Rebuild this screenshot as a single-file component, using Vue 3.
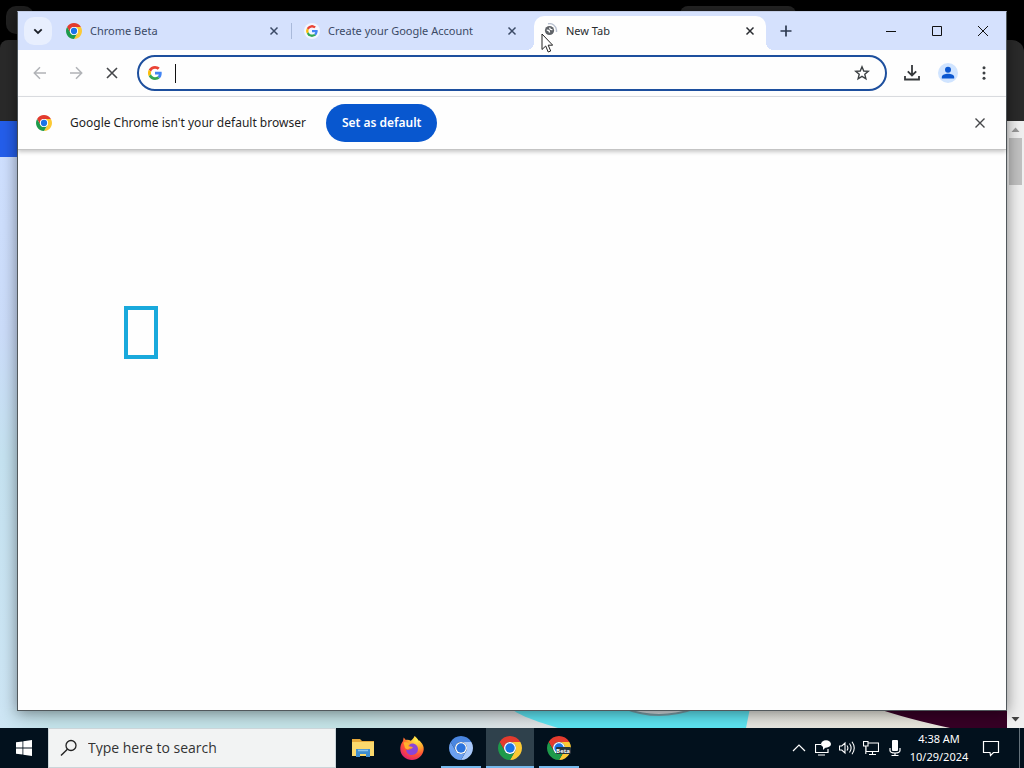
<script setup>
import { ref } from 'vue'

const address = ref('')
const query = ref('')
const tabs = [
  { title: 'Chrome Beta', icon: 'chrome', active: false },
  { title: 'Create your Google Account', icon: 'google', active: false },
  { title: 'New Tab', icon: 'loading', active: true },
]
const apps = [
  { name: 'File Explorer', icon: 'folder', state: '' },
  { name: 'Firefox', icon: 'firefox', state: '' },
  { name: 'Chromium', icon: 'chromium', state: 'open' },
  { name: 'Google Chrome', icon: 'chrome', state: 'open current' },
  { name: 'Chrome Beta', icon: 'beta', state: 'open' },
]
</script>

<template>
  <svg class="symbols" aria-hidden="true">
    <defs>
      <symbol id="i-chrome" viewBox="0 0 24 24">
        <path fill="#e33b2e" d="M1.61 6A12 12 0 0 1 22.39 6H12A6 6 0 0 0 6.8 15Z" />
        <path fill="#fcc934" transform="rotate(120 12 12)" d="M1.61 6A12 12 0 0 1 22.39 6H12A6 6 0 0 0 6.8 15Z" />
        <path fill="#1e9a4b" transform="rotate(240 12 12)" d="M1.61 6A12 12 0 0 1 22.39 6H12A6 6 0 0 0 6.8 15Z" />
        <circle cx="12" cy="12" r="6" fill="#fff" />
        <circle cx="12" cy="12" r="4.7" fill="#1a73e8" />
      </symbol>
      <symbol id="i-chromium" viewBox="0 0 24 24">
        <path fill="#4a86e0" d="M1.61 6A12 12 0 0 1 22.39 6H12A6 6 0 0 0 6.8 15Z" />
        <path fill="#a9c9fb" transform="rotate(120 12 12)" d="M1.61 6A12 12 0 0 1 22.39 6H12A6 6 0 0 0 6.8 15Z" />
        <path fill="#6ba0f0" transform="rotate(240 12 12)" d="M1.61 6A12 12 0 0 1 22.39 6H12A6 6 0 0 0 6.8 15Z" />
        <circle cx="12" cy="12" r="6" fill="#fff" />
        <circle cx="12" cy="12" r="4.7" fill="#2b74de" />
      </symbol>
      <symbol id="i-beta" viewBox="0 0 24 24">
        <use href="#i-chrome" width="24" height="24" />
        <rect x="9" y="11" width="15" height="7" rx="1" fill="#25343d" />
        <text x="16" y="16.8" text-anchor="middle" class="beta-text">Beta</text>
      </symbol>
      <symbol id="i-google" viewBox="0 0 48 48">
        <path fill="#ea4335" d="M24 9.5c3.54 0 6.71 1.22 9.21 3.6l6.85-6.85C35.9 2.38 30.47 0 24 0 14.62 0 6.51 5.38 2.56 13.22l7.98 6.19C12.43 13.72 17.74 9.5 24 9.5z" />
        <path fill="#4285f4" d="M46.98 24.55c0-1.57-.15-3.09-.38-4.55H24v9.02h12.94c-.58 2.96-2.26 5.48-4.78 7.18l7.73 6c4.51-4.18 7.09-10.36 7.09-17.65z" />
        <path fill="#fbbc05" d="M10.53 28.59A14.5 14.5 0 0 1 9.77 24c0-1.6.27-3.14.76-4.59l-7.98-6.19A23.9 23.9 0 0 0 0 24c0 3.88.92 7.54 2.56 10.78l7.97-6.19z" />
        <path fill="#34a853" d="M24 48c6.48 0 11.93-2.13 15.89-5.81l-7.73-6c-2.15 1.45-4.92 2.3-8.16 2.3-6.26 0-11.57-4.22-13.47-9.91l-7.98 6.19C6.51 42.62 14.62 48 24 48z" />
      </symbol>
      <symbol id="i-loading" viewBox="0 0 16 16">
        <path d="M6 .8a7 7 0 0 1 8.500 6.200v2" fill="none" stroke="#b9c1d0" stroke-width="1.4" />
        <circle cx="7.5" cy="7.5" r="4.6" fill="#5f6368" />
        <path d="M4.800 7.200c1.800-.2 2.700.5 2.700 2.300M7.800 4.600c-.2 1.600.8 2.200 2.600 2" fill="none" stroke="#fff" stroke-width="1.400" />
      </symbol>
      <symbol id="i-folder" viewBox="0 0 24 24">
        <path d="M1 3h8l2 2h12v15H1z" fill="#e6a93a" />
        <path d="M1 6h22v14H1z" fill="#fbd96d" />
        <path d="M5 13h14v8h-4v-3H9v3H5z" fill="#3f8ed0" />
        <path d="M7 14.500h10" stroke="#8cc5ee" stroke-width="1.500" />
      </symbol>
      <radialGradient id="fox" cx="70%" cy="15%" r="90%">
        <stop offset="0" stop-color="#fff04e" /><stop offset=".4" stop-color="#ffa52c" />
        <stop offset=".7" stop-color="#ff5136" /><stop offset="1" stop-color="#e1236f" />
      </radialGradient>
      <symbol id="i-firefox" viewBox="0 0 24 24">
        <path fill="url(#fox)" d="M14.500 0c2 1.200 3.200 3 4 4.500 1-.1 1.700.5 2.200 1.600C23 8.500 24 11 23.700 13.700 23 19.500 18 24 12 24S.6 19.500.3 13.500C.1 10.500 1 7.500 3 5l.6-3.500C4.500 2.200 5.200 3 5.800 4c1.800-.4 3.500 0 5 .8 1-.6 2.800-2.500 3.700-4.800z" />
        <path fill="#8b45d8" d="M12 7.500c3.800 0 6 2.500 6 5.600 0 3.500-2.600 5.900-6 5.900-3.600 0-6-2.600-5.800-5.600 1 .7 2.300.7 3.400.1 1.200-.7 2.200-.9 3-1.500.5-.9-.4-1.200-1.500-1.300-1 0-1.700-.3-2.100-.8.3-1.200 1.400-2.300 3-2.400z" />
        <path fill="#ffb12e" d="M3.500 6.500C6 5.700 8 6.300 9.500 8c-1 .5-1.500 1.200-1.500 2 .5.700 1.500.8 3 .9-.6 1-1.600 1.200-2.600 2.100-1.400.7-2.900-.2-3.500-1.500z" />
      </symbol>
    </defs>
  </svg>

  <div class="desktop">
    <div class="backdrop">
      <div class="back-tabs"><span class="back-pill"></span><span class="back-tab"></span></div>
      <div class="back-toolbar"></div>
      <div class="back-page">
        <div class="wallpaper">
          <div class="blue-band"></div>
          <svg class="shapes" viewBox="0 0 1007 20" preserveAspectRatio="none" aria-hidden="true">
            <path d="M510 0C518 6 528 11 558 20H746L750 0z" fill="#5ce2ef" />
            <path d="M624 0Q658 14 696 0z" fill="#d6dde2" stroke="#789ca5" stroke-width="2" />
            <path d="M876 0Q904 10 950 20H1007V0z" fill="#360025" />
          </svg>
        </div>
        <div class="scrollbar">
          <svg viewBox="0 0 17 17"><path d="M4.500 11 8.500 6.500 12.500 11z" fill="#999" /></svg>
          <span class="thumb"></span>
          <svg class="down" viewBox="0 0 17 17"><path d="M4.500 6 8.500 10.500 12.500 6z" fill="#444" /></svg>
        </div>
      </div>
    </div>

    <main class="window">
      <header class="strip">
        <button class="tab-search" aria-label="Search tabs">
          <svg viewBox="0 0 16 16"><path d="m4.300 6.300 3.700 3.700 3.700-3.700" fill="none" stroke="#1b1f27" stroke-width="1.800" /></svg>
        </button>
        <nav class="tabs">
          <div v-for="t in tabs" :key="t.title" class="tab" :class="{ active: t.active }">
            <svg class="favicon" :class="t.icon"><use :href="'#i-' + t.icon" /></svg>
            <a href="#" class="tab-title">{{ t.title }}</a>
            <button class="close" :aria-label="'Close ' + t.title">
              <svg viewBox="0 0 16 16"><path d="m4 4 8 8M12 4l-8 8" fill="none" stroke="currentColor" stroke-width="1.700" /></svg>
            </button>
          </div>
        </nav>
        <button class="new-tab" aria-label="New tab">
          <svg viewBox="0 0 16 16"><path d="M8 2.500v11M2.500 8h11" stroke="#2d3a50" stroke-width="1.700" /></svg>
        </button>
        <div class="controls">
          <button aria-label="Minimize"><svg viewBox="0 0 12 12"><path d="M1 6.500h10" stroke="#111" /></svg></button>
          <button aria-label="Maximize"><svg viewBox="0 0 12 12"><path d="M1.500 1.500h9v9h-9z" fill="none" stroke="#111" /></svg></button>
          <button aria-label="Close window"><svg viewBox="0 0 12 12"><path d="m1 1 10 10M11 1 1 11" stroke="#111" /></svg></button>
        </div>
      </header>

      <div class="toolbar">
        <button class="tool" aria-label="Back"><svg viewBox="0 0 16 16"><path d="M14 8H2.500M8 2.300 2.300 8 8 13.700" fill="none" stroke="#b1b3b7" stroke-width="1.500" /></svg></button>
        <button class="tool" aria-label="Forward"><svg viewBox="0 0 16 16"><path d="M2 8h11.500M8 2.300 13.700 8 8 13.700" fill="none" stroke="#b1b3b7" stroke-width="1.500" /></svg></button>
        <button class="tool" aria-label="Stop"><svg viewBox="0 0 16 16"><path d="m3 3 10 10M13 3 3 13" stroke="#45474a" stroke-width="1.600" /></svg></button>
        <div class="omnibox">
          <svg class="g"><use href="#i-google" /></svg>
          <span class="caret"></span>
          <input v-model="address" type="text" aria-label="Address and search bar" />
          <button class="star" aria-label="Bookmark this tab">
            <svg viewBox="0 0 16 16"><path d="m8 1.800 1.750 4.200 4.550.35-3.500 2.950 1.100 4.500L8 11.400l-3.900 2.400 1.100-4.500L1.700 6.350 6.250 6z" fill="none" stroke="#3c4043" stroke-width="1.400" /></svg>
          </button>
        </div>
        <button class="tool download" aria-label="Downloads"><svg viewBox="0 0 18 18"><path d="M9 1v10M4.800 7.300 9 11.500l4.200-4.200M2 12v3.500h14V12" fill="none" stroke="#35383b" stroke-width="1.800" /></svg></button>
        <button class="tool profile" aria-label="Profile"><svg viewBox="0 0 20 20"><circle cx="10" cy="10" r="10" fill="#d0e4ff" /><circle cx="10" cy="6.800" r="3" fill="#0b57d0" /><path d="M3.800 15.500v-1.500c0-2 3.500-3.200 6.200-3.200s6.200 1.200 6.200 3.200v1.500z" fill="#0b57d0" /></svg></button>
        <button class="tool" aria-label="Menu"><svg viewBox="0 0 16 16" fill="#3c4043"><circle cx="8" cy="2.800" r="1.500" /><circle cx="8" cy="8" r="1.500" /><circle cx="8" cy="13.200" r="1.500" /></svg></button>
      </div>

      <section class="infobar">
        <svg class="info-logo"><use href="#i-chrome" /></svg>
        <span class="info-text">Google Chrome isn't your default browser</span>
        <button class="default-btn">Set as default</button>
        <button class="tool dismiss" aria-label="Dismiss"><svg viewBox="0 0 16 16"><path d="m3.500 3.500 9 9M12.500 3.500l-9 9" stroke="#45474a" stroke-width="1.400" /></svg></button>
      </section>

      <div class="page"><div class="marker"></div></div>
    </main>

    <footer class="taskbar">
      <button class="start" aria-label="Start"><svg viewBox="0 0 16 16" fill="#fff"><path d="M0 2.300 6.500 1.400v6.200H0zM7.300 1.300 16 0v7.600H7.300zM0 8.400h6.500v6.200L0 13.700zM7.300 8.400H16V16l-8.700-1.300z" /></svg></button>
      <label class="search">
        <svg viewBox="0 0 18 18"><circle cx="11" cy="6.500" r="5" fill="none" stroke="#222" stroke-width="1.300" /><path d="m7.400 10.200-6.400 6.400" stroke="#222" stroke-width="1.400" /></svg>
        <input v-model="query" type="text" placeholder="Type here to search" aria-label="Type here to search" />
      </label>
      <nav class="apps">
        <button v-for="a in apps" :key="a.name" class="app" :class="a.state" :aria-label="a.name">
          <svg><use :href="'#i-' + a.icon" /></svg>
        </button>
      </nav>
      <div class="tray">
        <svg viewBox="0 0 16 16"><path d="m2 11 6-6 6 6" fill="none" stroke="#fff" stroke-width="1.200" /></svg>
        <svg viewBox="0 0 16 16"><path d="M6 4.500H.5v8H13V9M3 15h7" fill="none" stroke="#fff" stroke-width="1.200" /><ellipse cx="11" cy="4" rx="5" ry="3.700" fill="#fff" /><path d="M8 5v5l3-3z" fill="#fff" /></svg>
        <svg viewBox="0 0 16 16" fill="none" stroke="#fff" stroke-width="1.100"><path d="M.5 6v4h2.300L6 13V3L2.800 6zM8 5.500q1.800 2.500 0 5M10.500 3.500q3.200 4.500 0 9M13 1.800q4.500 6.200 0 12.400" /></svg>
        <svg viewBox="0 0 16 16" fill="none" stroke="#fff" stroke-width="1.100"><path d="M5 3h10.500v8.500H3V7M9.500 11.500V14M6 14.500h7M.5 1.500h4.500v4.500H.5zM2.800 6v8" /></svg>
        <svg viewBox="0 0 16 16"><rect x="5" y="0" width="6" height="11" rx="1" fill="#fff" /><path d="M3 8v2.500Q3 13 8 13t5-2.500V8M8 13v2.500M4.500 15.500h7" fill="none" stroke="#fff" stroke-width="1.200" /></svg>
      </div>
      <div class="clock"><time>4:38 AM</time><time>10/29/2024</time></div>
      <button class="notify" aria-label="Notifications"><svg viewBox="0 0 18 18"><path d="M1.500 2.500h15v11h-5L8.500 16.500 8 13.500H1.500z" fill="none" stroke="#fff" stroke-width="1.200" /></svg></button>
      <span class="peek"></span>
    </footer>

    <svg class="pointer" viewBox="0 0 12 20" aria-hidden="true"><path d="M1 1v15.500l3.700-3.500 2.500 6 2.500-1-2.500-5.800h4.500z" fill="#fff" stroke="#222" /></svg>
  </div>
</template>

<style>
body { overflow: hidden; }
</style>

<style scoped>
* { box-sizing: border-box; }
button { border: 0; padding: 0; background: none; font: inherit; color: inherit; display: flex; align-items: center; justify-content: center; flex: none; }
input { border: 0; outline: 0; padding: 0; background: none; font: inherit; min-width: 0; }
svg { display: block; flex: none; }
.symbols { position: absolute; width: 0; height: 0; }
.beta-text { font: bold 6px "Open Sans", sans-serif; fill: #fff; }

.desktop { position: relative; height: 100vh; display: flex; flex-direction: column; font: 12px/16px "Noto Sans", "Open Sans", sans-serif; color: #1f1f1f; }
.backdrop { flex: 1; min-height: 0; display: flex; flex-direction: column; background: #000; }
.back-tabs { height: 40px; display: flex; justify-content: space-between; padding: 6px 228px 0 6px; }
.back-pill { width: 28px; height: 28px; border-radius: 10px; background: #202020; }
.back-tab { width: 116px; border-radius: 8px 8px 0 0; background: #252525; }
.back-toolbar { height: 81px; background: #2a2a2a; border-radius: 8px 12px 0 0; }
.back-page { flex: 1; min-height: 0; display: flex; }
.wallpaper { flex: 1; display: flex; flex-direction: column; justify-content: space-between; background: linear-gradient(#cfe0ff 0, #cbdcf9 35%, #c5e2f0 55%, #cde5f4 100%); }
.blue-band { height: 36px; background: #245eea; }
.shapes { width: 100%; height: 20px; background: linear-gradient(90deg, #cde5f4 0, #c3e2e9 5%, #c3e2e5 35%, #dbe2e5 50%, #e3e3dd 75%, #e8e5da 100%); }
.scrollbar { width: 17px; background: #f0f0f0; display: flex; flex-direction: column; align-items: center; }
.scrollbar svg { width: 17px; height: 17px; }
.thumb { width: 13px; height: 47px; background: #c1c1c1; }
.scrollbar .down { margin-top: auto; }

.window { position: absolute; top: 11px; right: 17px; bottom: 57px; left: 17px; display: flex; flex-direction: column; background: #fefefe; border: 1px solid #51585c; border-top-color: #c3cde6; box-shadow: 0 2px 14px rgba(0, 0, 0, .45); }
.strip { height: 38px; display: flex; align-items: center; background: #d5e1fd; padding-left: 6px; }
.tab-search { width: 28px; height: 28px; border-radius: 10px; background: #e8effe; }
.tab-search svg { width: 16px; height: 16px; }
.tabs { align-self: stretch; display: flex; flex: 0 1 716px; min-width: 0; padding-left: 2px; }
.tab { flex: 1; min-width: 0; display: flex; align-items: center; padding: 0 10px 0 12px; color: #3b4a66; position: relative; }
.tab:first-child::after { content: ""; position: absolute; right: 0; width: 1px; height: 16px; background: #a9b9da; }
.tab.active { color: #2a2d31; z-index: 0; }
.tab.active::before { content: ""; position: absolute; z-index: -1; inset: 4px 2px 0 4px; border-radius: 10px 10px 0 0; background: #fefefe; }
.tab.active::after { content: ""; position: absolute; z-index: -1; left: -4px; right: -6px; bottom: 0; height: 8px; background: radial-gradient(circle at 0 0, transparent 8px, #fefefe 8px) left / 8px 8px no-repeat, radial-gradient(circle at 100% 0, transparent 8px, #fefefe 8px) right / 8px 8px no-repeat; }
.favicon { width: 16px; height: 16px; }
.favicon.google { background: #f3f6fe; border-radius: 8px; padding: 2px; }
.tab-title { flex: 1; min-width: 0; margin-left: 8px; color: inherit; font-size: 11px; text-decoration: none; white-space: nowrap; overflow: hidden; }
.close { width: 16px; height: 16px; }
.close svg { width: 14px; height: 14px; }
.new-tab { width: 28px; height: 28px; margin-left: 4px; }
.new-tab svg { width: 16px; height: 16px; }
.controls { display: flex; align-self: stretch; margin-left: auto; }
.controls button { width: 46px; }
.controls svg { width: 12px; height: 12px; }

.toolbar { height: 47px; display: flex; align-items: center; padding: 0 4px; border-bottom: 1px solid #dfe1e5; }
.tool { width: 36px; height: 36px; }
.tool svg { width: 16px; height: 16px; }
.tool.download svg { width: 18px; height: 18px; }
.tool.profile svg { width: 20px; height: 20px; }
.omnibox { flex: 1; height: 36px; margin: 0 7px; display: flex; align-items: center; border: 2px solid #1d4f9e; border-radius: 18px; padding: 0 9px; }
.omnibox input { flex: 1; font-size: 14px; }
.g { width: 14px; height: 14px; }
.caret { width: 1px; height: 19px; margin-left: 13px; background: #111; }
.star { width: 28px; height: 28px; }
.star svg { width: 16px; height: 16px; }

.infobar { height: 53px; display: flex; align-items: center; padding: 0 8px 0 18px; border-bottom: 1px solid #c4c4c4; box-shadow: 0 2px 4px rgba(0, 0, 0, .22); }
.info-logo { width: 16px; height: 16px; }
.info-text { margin: 0 20px 0 18px; white-space: nowrap; }
.default-btn { height: 38px; padding: 0 16px; border-radius: 19px; background: #0857cf; color: #fff; font-weight: 600; white-space: nowrap; }
.dismiss { margin-left: auto; }
.page { flex: 1; padding: 156px 106px; }
.marker { width: 34px; height: 53px; border: 4px solid #19a9dc; }

.taskbar { height: 40px; flex: none; display: flex; background: #02111d; color: #fff; position: relative; }
.start { width: 48px; }
.start svg { width: 16px; height: 16px; }
.search { flex: 0 1 288px; min-width: 0; display: flex; align-items: center; gap: 10px; padding: 0 11px; background: #f2f3f3; border: 1px solid #cbd5d9; }
.search svg { width: 18px; height: 18px; }
.search input { flex: 1; font-family: "Open Sans", sans-serif; font-size: 14px; color: #333; }
.search input::placeholder { color: #333; opacity: 1; }
.apps { display: flex; gap: 1px; padding-left: 3px; }
.app { width: 48px; position: relative; }
.app svg { width: 24px; height: 24px; }
.app.current { background: #2f414c; }
.app.open::after { content: ""; position: absolute; bottom: 0; left: 4px; right: 4px; height: 2px; background: #76b9ed; }
.app.current::after { left: 0; right: 0; }
.tray { display: flex; align-items: center; gap: 8px; margin-left: auto; }
.tray svg { width: 16px; height: 16px; }
.clock { width: 72px; display: flex; flex-direction: column; align-items: center; justify-content: center; line-height: 18px; font-size: 11px; }
.notify { width: 32px; margin-right: 12px; }
.notify svg { width: 18px; height: 18px; }
.peek { width: 5px; border-left: 1px solid #65727b; }
.pointer { position: absolute; left: 541px; top: 33px; width: 12px; height: 20px; }
</style>
